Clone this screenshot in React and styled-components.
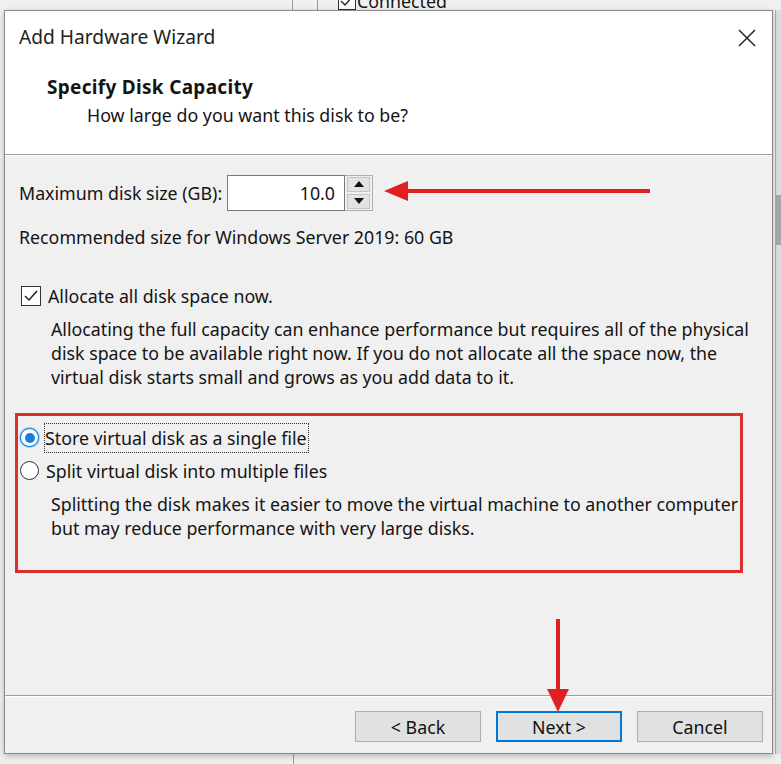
import React from 'react';
import styled, { createGlobalStyle } from 'styled-components';

const Global = createGlobalStyle`
  html, body { margin: 0; padding: 0; background: #f0f0f0; }
  body { font-family: "Noto Sans", "Open Sans", sans-serif; color: #141414; }
`;

const Page = styled.div`
  width: 781px;
  height: 764px;
  overflow: hidden;
  position: relative;
  background: #f0f0f0;
  display: flex;
  flex-direction: column;
`;

const BackStrip = styled.div`
  height: 10px;
  display: flex;
  align-items: flex-end;
  overflow: hidden;
  font-size: 17px;
  line-height: 17px;
`;

const BackCell = styled.div`
  width: ${p => p.w}px;
  height: 10px;
  border-right: ${p => (p.line ? '1px solid #9a9a9a' : 'none')};
  flex-shrink: 0;
`;

const BackCheck = styled.div`
  display: flex;
  align-items: flex-end;
  gap: 1px;
  margin-top: -8px;
  span { font-size: 17.8px; }
`;

const MidRow = styled.div`
  display: flex;
  height: 747px;
`;

const Dialog = styled.div`
  margin-left: 4px;
  width: 767px;
  border: 1px solid #8a8a8a;
  background: #f0f0f0;
  display: flex;
  flex-direction: column;
  box-shadow: 0 2px 6px rgba(0, 0, 0, 0.25);
  position: relative;
`;

const RightSliver = styled.div`
  margin-left: 2px;
  flex: 1;
  display: flex;
  flex-direction: column;
  border-left: 1px solid #b0b0b0;
  background: #dcdcdc;
`;

const SliverThumb = styled.div`
  margin-top: 185px;
  height: 50px;
  background: #a8a8a8;
`;

const Header = styled.div`
  background: #fff;
  height: 143px;
  border-bottom: 1px solid #a0a0a0;
  box-shadow: 0 1px 0 #fff;
  display: flex;
  flex-direction: column;
`;

const TitleBar = styled.div`
  display: flex;
  align-items: center;
  justify-content: space-between;
  height: 52px;
  padding: 0 14px 0 14px;
  font-size: 19.2px;
  color: #222;
`;

const CloseBtn = styled.div`
  width: 22px;
  height: 22px;
  display: flex;
  align-items: center;
  justify-content: center;
  margin-top: 2px;
`;

const HeadTitle = styled.div`
  margin: 11px 0 0 42px;
  font-weight: 700;
  font-size: 19px;
  letter-spacing: 0.3px;
  line-height: 26px;
`;

const HeadSub = styled.div`
  margin: 3px 0 0 82px;
  font-size: 17.8px;
  line-height: 24px;
`;

const Body = styled.div`
  flex: 1;
  padding: 20px 15px 0 14px;
  display: flex;
  flex-direction: column;
  font-size: 17.8px;
  line-height: 24px;
`;

const SizeRow = styled.div`
  display: flex;
  align-items: center;
  height: 36px;
`;

const SizeLabel = styled.div`
  width: 208px;
`;

const NumInput = styled.div`
  width: 107px;
  height: 34px;
  border: 1px solid #7a7a7a;
  background: #fff;
  display: flex;
  align-items: center;
  justify-content: flex-end;
  padding-right: 9px;
`;

const Spinner = styled.div`
  width: 28px;
  height: 36px;
  border: 1px solid #adadad;
  border-left: none;
  background: #f0f0f0;
  display: flex;
  flex-direction: column;
  gap: 2px;
  padding: 1px 2px;
  box-sizing: border-box;
`;

const SpinBtn = styled.div`
  flex: 1;
  background: #e3e3e3;
  border: 1px solid #c4c4c4;
  display: flex;
  align-items: center;
  justify-content: center;
`;

const Tri = styled.div`
  width: 0;
  height: 0;
  border-left: 5px solid transparent;
  border-right: 5px solid transparent;
  ${p => (p.down ? 'border-top: 6px solid #111;' : 'border-bottom: 6px solid #111;')}
`;

const Text = styled.div`
  margin-top: ${p => p.mt || 0}px;
  margin-left: ${p => p.ml || 0}px;
`;

const OptionRow = styled.label`
  display: flex;
  align-items: center;
  gap: 7px;
  height: ${p => p.h || 24}px;
  margin-top: ${p => p.mt || 0}px;
  margin-left: 2px;
`;

const CheckBox = styled.div`
  width: 18px;
  height: 18px;
  border: 1px solid #333;
  background: #fff;
  display: flex;
  align-items: center;
  justify-content: center;
`;

const Radio = styled.div`
  width: 17px;
  height: 17px;
  border-radius: 50%;
  border: 1px solid ${p => (p.on ? '#0078d7' : '#333')};
  background: #fff;
  display: flex;
  align-items: center;
  justify-content: center;
  box-shadow: ${p => (p.on ? '0 0 0 1px #9cc9ef' : 'none')};
  &::after {
    content: '';
    width: 10px;
    height: 10px;
    border-radius: 50%;
    background: ${p => (p.on ? '#1a7fd6' : 'transparent')};
  }
`;

const Focus = styled.span`
  outline: 1px dotted #333;
  outline-offset: 0;
  padding: 2px 1px 2px 0;
  margin-left: -1px;
`;

const RedBox = styled.div`
  margin: 24px 0 0 -4px;
  width: 722px;
  height: 147px;
  border: 3px solid #d8302b;
  display: flex;
  flex-direction: column;
  padding-top: 7px;
`;

const Footer = styled.div`
  height: 42px;
  border-top: 1px solid #a0a0a0;
  box-shadow: inset 0 1px 0 #fff;
  display: flex;
  justify-content: flex-end;
  align-items: flex-start;
  padding: 15px 9px 0 0;
  gap: 15px;
`;

const Button = styled.div`
  width: ${p => (p.primary ? 122 : 124)}px;
  height: ${p => (p.primary ? 27 : 29)}px;
  border: ${p => (p.primary ? '2px solid #0078d7' : '1px solid #adadad')};
  background: #e1e1e1;
  display: flex;
  align-items: center;
  justify-content: center;
  font-size: 17.8px;
  color: #111;
`;

const HArrow = styled.div`
  position: absolute;
  left: 384px;
  top: 180px;
`;

const VArrow = styled.div`
  position: absolute;
  left: 547px;
  top: 619px;
`;

const BottomStrip = styled.div`
  flex: 1;
  display: flex;
`;

function App() {
  return (
    <Page>
      <Global />
      <BackStrip>
        <BackCell w={292} line />
        <BackCell w={24} line />
        <BackCell w={20} />
        <BackCheck>
          <svg width="18" height="18" viewBox="0 0 18 18">
            <rect x="0.5" y="0.5" width="17" height="17" fill="#fff" stroke="#333" />
            <path d="M3 9 L7 13 L15 4" fill="none" stroke="#222" strokeWidth="1.4" />
          </svg>
          <span>Connected</span>
        </BackCheck>
      </BackStrip>
      <MidRow>
        <Dialog>
          <Header>
            <TitleBar>
              <span>Add Hardware Wizard</span>
              <CloseBtn>
                <svg width="18" height="18" viewBox="0 0 18 18">
                  <path d="M1 1 L17 17 M17 1 L1 17" stroke="#222" strokeWidth="1.5" />
                </svg>
              </CloseBtn>
            </TitleBar>
            <HeadTitle>Specify Disk Capacity</HeadTitle>
            <HeadSub>How large do you want this disk to be?</HeadSub>
          </Header>
          <Body>
            <SizeRow>
              <SizeLabel>Maximum disk size (GB):</SizeLabel>
              <NumInput>10.0</NumInput>
              <Spinner>
                <SpinBtn><Tri /></SpinBtn>
                <SpinBtn><Tri down /></SpinBtn>
              </Spinner>
            </SizeRow>
            <Text mt={14}>Recommended size for Windows Server 2019: 60 GB</Text>
            <OptionRow mt={35}>
              <CheckBox>
                <svg width="16" height="16" viewBox="0 0 16 16">
                  <path d="M2 8 L6 12 L14 3" fill="none" stroke="#222" strokeWidth="1.5" />
                </svg>
              </CheckBox>
              <span>Allocate all disk space now.</span>
            </OptionRow>
            <Text mt={9} ml={32}>
              Allocating the full capacity can enhance performance but requires all of the physical<br />
              disk space to be available right now. If you do not allocate all the space now, the<br />
              virtual disk starts small and grows as you add data to it.
            </Text>
            <RedBox>
              <OptionRow h={30}>
                <Radio on />
                <Focus>Store virtual disk as a single file</Focus>
              </OptionRow>
              <OptionRow h={30} mt={3}>
                <Radio />
                <span>Split virtual disk into multiple files</span>
              </OptionRow>
              <Text mt={6} ml={33}>
                Splitting the disk makes it easier to move the virtual machine to another computer<br />
                but may reduce performance with very large disks.
              </Text>
            </RedBox>
          </Body>
          <Footer>
            <Button>&lt; Back</Button>
            <Button primary>Next &gt;</Button>
            <Button>Cancel</Button>
          </Footer>
        </Dialog>
        <RightSliver>
          <SliverThumb />
        </RightSliver>
      </MidRow>
      <BottomStrip>
        <BackCell w={293} line />
      </BottomStrip>
      <HArrow>
        <svg width="270" height="22" viewBox="0 0 270 22">
          <path d="M22 11 L266 11" stroke="#e02020" strokeWidth="4" />
          <path d="M0 11 L24 1 L24 21 Z" fill="#e02020" />
        </svg>
      </HArrow>
      <VArrow>
        <svg width="22" height="94" viewBox="0 0 22 94">
          <path d="M11 0 L11 72" stroke="#e02020" strokeWidth="4" />
          <path d="M0 70 L22 70 L11 93 Z" fill="#e02020" />
        </svg>
      </VArrow>
    </Page>
  );
}

export default App;
